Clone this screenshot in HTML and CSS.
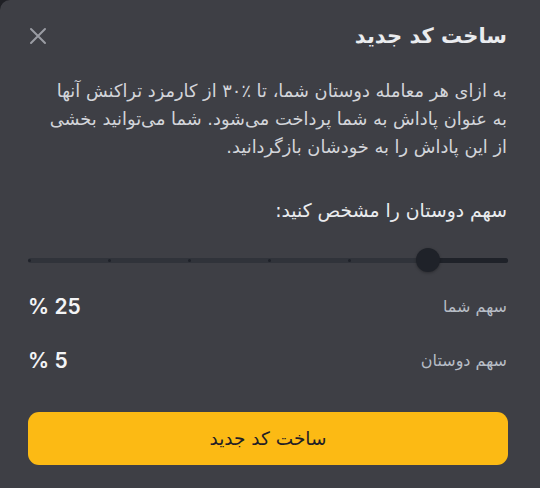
FILE: index.html
```html
<!DOCTYPE html>
<html lang="fa" dir="rtl">
<head>
<meta charset="utf-8">
<link rel="stylesheet" href="styles.css">
</head>
<body>
<div class="modal">
  <div class="header">
    <h1 class="title">ساخت کد جدید</h1>
    <button class="close" aria-label="close">
      <svg width="18" height="18" viewBox="0 0 18 18"><path d="M2 2L16 16M16 2L2 16" stroke="#9a9ca3" stroke-width="2" stroke-linecap="round"/></svg>
    </button>
  </div>
  <p class="desc">به ازای هر معامله دوستان شما، تا ٪۳۰ از کارمزد تراکنش آنها<br>به عنوان پاداش به شما پرداخت می‌شود. شما می‌توانید بخشی<br>از این پاداش را به خودشان بازگردانید.</p>
  <div class="label">سهم دوستان را مشخص کنید:</div>
  <div class="slider">
    <div class="track">
      <div class="fill"></div>
      <span class="mark m0"></span><span class="mark m1"></span><span class="mark m2"></span><span class="mark m3"></span><span class="mark m4"></span>
      <div class="thumb"></div>
    </div>
  </div>
  <div class="row"><span class="rlabel">سهم شما</span><span class="rval" dir="ltr">% 25</span></div>
  <div class="row"><span class="rlabel">سهم دوستان</span><span class="rval" dir="ltr">% 5</span></div>
  <button class="submit">ساخت کد جدید</button>
</div>
</body>
</html>
```
FILE: styles.css
```css
html, body { margin: 0; padding: 0; }
body {
  background: #1f2025;
  width: 540px;
  height: 488px;
  overflow: hidden;
  font-family: "DejaVu Sans", "Noto Sans", sans-serif;
}
.modal {
  background: #3e3f45;
  height: 488px;
  box-sizing: border-box;
  border-top-left-radius: 10px;
  padding: 21px 33px 0 28px;
  display: flex;
  flex-direction: column;
}
.header {
  display: flex;
  justify-content: space-between;
  align-items: center;
  height: 30px;
}
.title {
  margin: 0;
  font-size: 21px;
  font-weight: bold;
  color: #eaecef;
  line-height: 30px;
}
.close {
  background: none;
  border: 0;
  padding: 0;
  width: 20px;
  height: 20px;
  display: flex;
  align-items: center;
  justify-content: center;
}
.desc {
  margin: 26px 0 0 0;
  font-size: 17.8px;
  line-height: 28px;
  color: #d3d5da;
  white-space: nowrap;
}
.label {
  margin-top: 38px;
  font-size: 18.8px;
  color: #eaecef;
  line-height: 24px;
}
.slider {
  margin-top: 24px;
  height: 26px;
  display: flex;
  align-items: center;
  margin-right: -1px;
}
.track {
  position: relative;
  flex: 1;
  height: 5px;
  border-radius: 3px;
  background: #30333a;
}
.fill {
  position: absolute;
  right: 0;
  top: 0;
  bottom: 0;
  width: 17%;
  background: #1f2229;
  border-radius: 3px;
}
.mark {
  position: absolute;
  top: 1px;
  width: 3px;
  height: 3px;
  border-radius: 50%;
  background: #1f2229;
}
.m0 { left: 0; }
.m1 { left: 16.6%; }
.m2 { left: 33.3%; }
.m3 { left: 50%; }
.m4 { left: 66.6%; }
.thumb {
  position: absolute;
  left: 83.3%;
  top: 50%;
  width: 24px;
  height: 24px;
  margin: -12px 0 0 -12px;
  border-radius: 50%;
  background: #1f2229;
  box-shadow: 0 1px 3px rgba(0,0,0,0.3);
}
.row {
  display: flex;
  justify-content: space-between;
  align-items: center;
  height: 30px;
}
.slider + .row { margin-top: 18px; }
.row + .row { margin-top: 24px; }
.rlabel {
  font-size: 16px;
  color: #b7bdc6;
}
.rval {
  font-family: "Inter", "Roboto", sans-serif;
  font-size: 21px;
  font-weight: 600;
  color: #f3f4f6;
}
.submit {
  margin-top: 37px;
  height: 53px;
  border: 0;
  border-radius: 11px;
  background: #fcba14;
  color: #1e2026;
  font-family: "DejaVu Sans", sans-serif;
  font-size: 18.5px;
  margin-right: -1px;
}
```
